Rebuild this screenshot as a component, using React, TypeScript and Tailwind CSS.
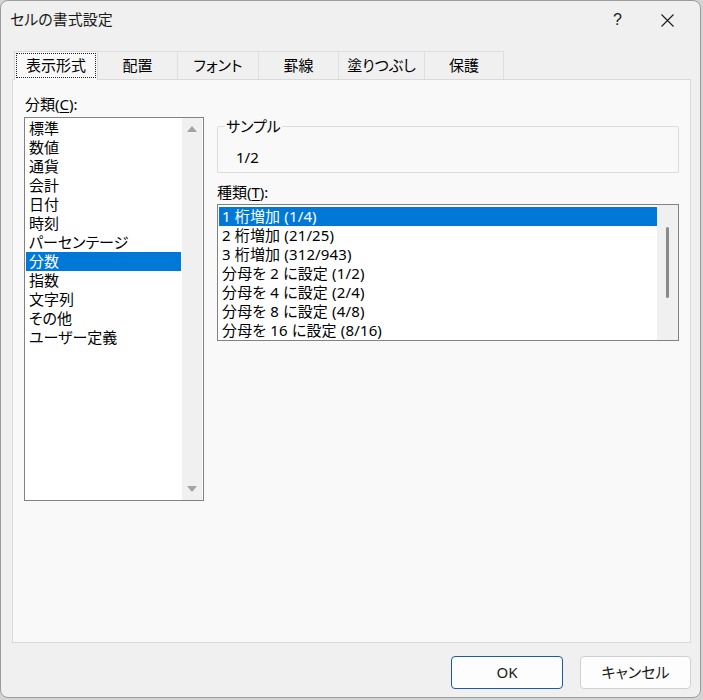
import React from "react";

const categories = [
  "標準",
  "数値",
  "通貨",
  "会計",
  "日付",
  "時刻",
  "パーセンテージ",
  "分数",
  "指数",
  "文字列",
  "その他",
  "ユーザー定義",
];

const fractionTypes = [
  "1 桁増加 (1/4)",
  "2 桁増加 (21/25)",
  "3 桁増加 (312/943)",
  "分母を 2 に設定 (1/2)",
  "分母を 4 に設定 (2/4)",
  "分母を 8 に設定 (4/8)",
  "分母を 16 に設定 (8/16)",
];

const tabs = [
  { label: "配置", w: "w-[80px]" },
  { label: "フォント", w: "w-[81px]" },
  { label: "罫線", w: "w-[80px]" },
  { label: "塗りつぶし", w: "w-[86px]" },
  { label: "保護", w: "w-[79px]" },
];

function ArrowUp() {
  return (
    <svg width="10" height="6" viewBox="0 0 10 6">
      <path d="M5 0 L10 6 L0 6 Z" fill="#a3a3a3" />
    </svg>
  );
}

function ArrowDown() {
  return (
    <svg width="10" height="6" viewBox="0 0 10 6">
      <path d="M0 0 L10 0 L5 6 Z" fill="#a3a3a3" />
    </svg>
  );
}

export default function App() {
  return (
    <div className="w-[703px] h-[700px] bg-[#d4d4d4] font-['Noto_Sans','Noto_Sans_CJK_JP',sans-serif] [font-feature-settings:'palt'] text-[15px] leading-[19px] text-black">
      <div className="w-[701px] h-[698px] rounded-[8px] border border-[#9c9c9c] bg-[#f0f0f0] flex flex-col overflow-hidden">
        {/* Title bar */}
        <div className="h-[49px] flex items-start pt-[9px] pl-[9px] pr-[26px]">
          <span className="text-[15px] leading-[19px] text-[#1a1a1a]">セルの書式設定</span>
          <div className="ml-auto flex items-center gap-[39px] pt-[1px]">
            <span className="text-[16px] leading-[18px] text-[#1a1a1a] font-['Liberation_Sans',sans-serif]">?</span>
            <svg width="13" height="13" viewBox="0 0 13 13" className="mt-px">
              <path d="M0.5 0.5 L12.5 12.5 M12.5 0.5 L0.5 12.5" stroke="#1a1a1a" strokeWidth="1.1" />
            </svg>
          </div>
        </div>

        {/* Tabs */}
        <div className="flex items-end h-[29px] pl-[13px] relative z-10">
          <div className="w-[84px] h-[29px] border-l border-t border-r border-[#d9d9d9] bg-[#f9f9f9] -mb-px p-[1px] pb-[2px]">
            <div className="w-full h-full border border-dotted border-[#222] flex items-center justify-center">
              表示形式
            </div>
          </div>
          {tabs.map((t) => (
            <div
              key={t.label}
              className={`${t.w} h-[28px] border-t border-r border-[#dedede] bg-[#f0f0f0] flex items-center justify-center`}
            >
              {t.label}
            </div>
          ))}
        </div>

        {/* Page */}
        <div className="ml-[11px] w-[679px] h-[564px] border border-[#dadada] bg-[#f9f9f9] flex pl-[11px] pt-[15px]">
          {/* Category column */}
          <div className="w-[180px] flex flex-col">
            <div className="h-[19px] pl-px">
              分類(<span className="underline underline-offset-2">C</span>):
            </div>
            <div className="mt-[3px] h-[384px] border border-[#828282] bg-white flex">
              <div className="flex-1 pt-px px-px">
                {categories.map((c) => (
                  <div
                    key={c}
                    className={`h-[19px] pl-[3px] ${c === "分数" ? "bg-[#0078d7] text-white" : ""}`}
                  >
                    {c}
                  </div>
                ))}
              </div>
              <div className="w-[20px] mr-px bg-[#f0f0f0] flex flex-col items-center justify-between py-[8px]">
                <ArrowUp />
                <ArrowDown />
              </div>
            </div>
          </div>

          {/* Type column */}
          <div className="ml-[13px] w-[462px] flex flex-col pt-[31px]">
            <div className="relative h-[47px] border border-[#dcdcdc] rounded-[2px]">
              <span className="absolute -top-[10px] left-[7px] px-px bg-[#f9f9f9]">サンプル</span>
              <div className="pt-[21px] pl-[18px]">1/2</div>
            </div>
            <div className="mt-[10px] h-[19px]">
              種類(<span className="underline underline-offset-2">T</span>):
            </div>
            <div className="mt-[2px] h-[137px] border border-[#828282] bg-white flex">
              <div className="flex-1 pt-[2px] pl-[1px]">
                {fractionTypes.map((t, i) => (
                  <div
                    key={t}
                    className={`h-[19px] pl-[3px] tracking-[0.01em] ${i === 0 ? "bg-[#0078d7] text-white" : ""}`}
                  >
                    {t}
                  </div>
                ))}
              </div>
              <div className="w-[21px] bg-[#f0f0f0] flex justify-center pt-[22px]">
                <div className="w-[3px] h-[71px] rounded-full bg-[#8a8a8a]" />
              </div>
            </div>
          </div>
        </div>

        {/* Buttons */}
        <div className="flex justify-end gap-[17px] pt-[13px] pr-[9px]">
          <button className="w-[112px] h-[33px] rounded-[4px] border border-[#1a5d9e] bg-[#fdfdfd] text-[15px] text-[#1a1a1a]">
            OK
          </button>
          <button className="w-[111px] h-[33px] rounded-[4px] border border-[#d0d0d0] bg-[#fdfdfd] text-[15px] text-[#1a1a1a]">
            キャンセル
          </button>
        </div>
      </div>
    </div>
  );
}
